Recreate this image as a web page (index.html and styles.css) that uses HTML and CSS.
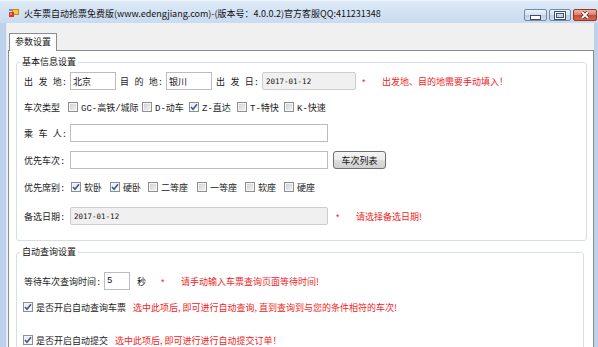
FILE: index.html
```html
<!DOCTYPE html>
<html>
  <head>
    <meta charset="utf-8">
    <title>火车票自动抢票免费版</title>
    <link rel="stylesheet" href="styles.css">
  </head>
  <body>
    <div class="window">
      <!-- 标题栏 -->
      <div class="titlebar">
        <svg class="app-icon" width="10" height="8" viewBox="0 0 10 8">
          <rect x="3.5" y="0.5" width="6" height="5" fill="#f7c844" stroke="#c98a12"/>
          <rect x="0" y="3" width="5" height="5" fill="#d9382a"/>
          <rect x="1" y="4" width="2" height="2" fill="#f08a7a"/>
          <rect x="0" y="0" width="3" height="2" fill="#6d8fc9"/>
        </svg>
        <span class="title">火车票自动抢票免费版(www.edengjiang.com)-(版本号：4.0.0.2)官方客服QQ:411231348</span>
        <div class="caption">
          <span class="cap min"></span>
          <span class="cap max"></span>
          <span class="cap close">
            <svg width="10" height="8" viewBox="0 0 10 8">
              <path d="M2 1 L8 7 M8 1 L2 7" stroke="#6b2418" stroke-width="3.4"/>
              <path d="M2 1 L8 7 M8 1 L2 7" stroke="#fff" stroke-width="1.8"/>
            </svg>
          </span>
        </div>
      </div>

      <div class="client">
        <div class="tabs">
          <div class="tab active">参数设置</div>
        </div>

        <div class="tab-page">
          <!-- 基本信息 -->
          <fieldset class="group group-basic">
            <legend>基本信息设置</legend>

            <div class="row">
              <span class="lbl">出 发 地:</span>
              <input class="input city" type="text" value="北京">
              <span class="lbl lbl-mid">目 的 地:</span>
              <input class="input city" type="text" value="银川">
              <span class="lbl lbl-mid">出 发 日:</span>
              <input class="input date date-short" type="text" value="2017-01-12" readonly>
              <span class="req">*</span>
              <span class="note">出发地、目的地需要手动填入！</span>
            </div>

            <div class="row types">
              <span class="lbl">车次类型</span>
              <label class="check"><span class="box"></span>GC-高铁/城际</label>
              <label class="check"><span class="box"></span>D-动车</label>
              <label class="check"><span class="box on"><svg width="8" height="8" viewBox="0 0 8 8"><path d="M1 4 L3 6.3 L7 1.2" fill="none" stroke="#3d5a92" stroke-width="1.6"/></svg></span>Z-直达</label>
              <label class="check"><span class="box"></span>T-特快</label>
              <label class="check"><span class="box"></span>K-快速</label>
            </div>

            <div class="row row-passenger">
              <span class="lbl">乘 车 人:</span>
              <input class="input wide" type="text">
            </div>

            <div class="row row-trains">
              <span class="lbl">优先车次:</span>
              <input class="input wide" type="text">
              <button class="btn">车次列表</button>
            </div>

            <div class="row seats">
              <span class="lbl">优先席别:</span>
              <label class="check"><span class="box on"><svg width="8" height="8" viewBox="0 0 8 8"><path d="M1 4 L3 6.3 L7 1.2" fill="none" stroke="#3d5a92" stroke-width="1.6"/></svg></span>软卧</label>
              <label class="check"><span class="box on"><svg width="8" height="8" viewBox="0 0 8 8"><path d="M1 4 L3 6.3 L7 1.2" fill="none" stroke="#3d5a92" stroke-width="1.6"/></svg></span>硬卧</label>
              <label class="check"><span class="box"></span>二等座</label>
              <label class="check"><span class="box"></span>一等座</label>
              <label class="check"><span class="box"></span>软座</label>
              <label class="check"><span class="box"></span>硬座</label>
            </div>

            <div class="row row-backup">
              <span class="lbl">备选日期:</span>
              <input class="input date wide" type="text" value="2017-01-12" readonly>
              <span class="req req-far">*</span>
              <span class="note">请选择备选日期!</span>
            </div>
          </fieldset>

          <!-- 自动查询 -->
          <fieldset class="group group-auto">
            <legend>自动查询设置</legend>

            <div class="row">
              <span class="lbl lbl-wait">等待车次查询时间:</span>
              <input class="input secs" type="text" value="5">
              <span class="unit">秒</span>
              <span class="req">*</span>
              <span class="note">请手动输入车票查询页面等待时间!</span>
            </div>

            <div class="row row-opt">
              <label class="check opt"><span class="box on"><svg width="8" height="8" viewBox="0 0 8 8"><path d="M1 4 L3 6.3 L7 1.2" fill="none" stroke="#3d5a92" stroke-width="1.6"/></svg></span>是否开启自动查询车票</label>
              <span class="note">选中此项后, 即可进行自动查询, 直到查询到与您的条件相符的车次!</span>
            </div>

            <div class="row row-submit">
              <label class="check opt"><span class="box on"><svg width="8" height="8" viewBox="0 0 8 8"><path d="M1 4 L3 6.3 L7 1.2" fill="none" stroke="#3d5a92" stroke-width="1.6"/></svg></span>是否开启自动提交</label>
              <span class="note">选中此项后, 即可进行进行自动提交订单！</span>
            </div>
          </fieldset>
        </div>
      </div>
    </div>
  </body>
</html>
```

FILE: styles.css
```css
* {
  box-sizing: border-box;
}
body {
  margin: 0;
  width: 598px;
  height: 347px;
  overflow: hidden;
  background: #bcd2ec;
  font-family: "Liberation Mono", "Noto Sans CJK SC", monospace;
  font-size: 9px;
  color: #1a1a1a;
}
.window {
  height: 347px;
  display: flex;
  flex-direction: column;
}

/* 标题栏 */
.titlebar {
  height: 23px;
  flex: none;
  display: flex;
  align-items: center;
  padding: 0 1px 0 9px;
  background: linear-gradient(#dde9f6, #c9dbf0);
  border-top: 1px solid #eef4fb;
}
.app-icon {
  flex: none;
  margin-top: 2px;
}
.title {
  margin-left: 5px;
  margin-top: 3px;
  font-family: "Noto Sans CJK SC", sans-serif;
  font-size: 9px;
  color: #111;
  white-space: nowrap;
}
.caption {
  margin-left: auto;
  align-self: flex-start;
  margin-top: 8px;
  display: flex;
  gap: 2px;
}
.cap {
  width: 23px;
  height: 12px;
  border: 1px solid #7389aa;
  border-radius: 2px;
  background: linear-gradient(#eef3fa, #d6e2f0 45%, #bccee5 50%, #d0ddee);
  display: flex;
  align-items: center;
  justify-content: center;
}
.cap.max {
  width: 22px;
}
.cap.close {
  width: 24px;
  border-color: #8e3b2c;
  background: linear-gradient(#eeb4a6, #db8471 45%, #c84a33 50%, #d9674f);
}
.cap.min::after {
  content: "";
  width: 9px;
  height: 3px;
  margin-top: 5px;
  background: #fff;
  border: 1px solid #3e4f6d;
}
.cap.max::after {
  content: "";
  width: 10px;
  height: 7px;
  border: 1px solid #3e4f6d;
  box-shadow: inset 0 0 0 1px #fff, inset 0 0 0 2px #3e4f6d;
}

/* 客户区 */
.client {
  flex: 1;
  min-height: 0;
  margin: 0 4px 0 6px;
  padding: 10px 0 0 1px;
  border-left: 1px solid #dfe8f3;
  background: #f0f0f0;
  display: flex;
  flex-direction: column;
}
.tabs {
  display: flex;
  margin-bottom: -1px;
  position: relative;
  z-index: 1;
}
.tab {
  margin-left: 1px;
  height: 18px;
  line-height: 16px;
  padding: 0 5px;
  border: 1px solid #898c95;
  border-bottom: none;
  background: #fff;
  font-family: "Noto Sans CJK SC", sans-serif;
}
.tab-page {
  flex: 1;
  border: 1px solid #898c95;
  background: #fff;
}

/* 分组框 */
.group {
  margin: 5px 6px 0 7px;
  padding: 4px 7px 15px 7px;
  border: 1px solid #d5dfe5;
  border-radius: 3px;
  min-width: 0;
}
.group legend {
  margin-left: -4px;
  padding: 0 2px;
  line-height: 12px;
  font-family: "Noto Sans CJK SC", sans-serif;
  color: #111;
}
.group-auto {
  margin: 5px 9px 0 7px;
  padding-top: 14px;
}

.row {
  display: flex;
  align-items: center;
  height: 18px;
  white-space: nowrap;
}
.row + .row {
  margin-top: 8px;
}
.row.row-trains,
.row.seats {
  margin-top: 9px;
}
.row.row-backup {
  margin-top: 11px;
}
.row.row-submit {
  margin-top: 15px;
}

.lbl {
  width: 46px;
  flex: none;
}
.lbl-mid {
  margin-left: 4px;
}
.lbl-wait {
  width: 80px;
}

.input {
  height: 18px;
  padding: 0 2px;
  border: 1px solid #b9bcc2;
  background: #fff;
  font-family: "Noto Sans CJK SC", sans-serif;
  font-size: 9px;
  color: #111;
  outline: none;
}
.input.city {
  width: 46px;
}
.input.wide {
  width: 258px;
}
.input.secs {
  width: 26px;
  font-family: "Liberation Mono", monospace;
}
.input.date {
  background: #f0f0f0;
  border-color: #cdcdcd;
  border-radius: 2px;
  padding-left: 3px;
  font-family: "DejaVu Sans Mono", monospace;
  font-size: 7.5px;
}
.input.date-short {
  width: 94px;
}

.btn {
  margin-left: 5px;
  width: 53px;
  height: 18px;
  padding: 0;
  border: 1px solid #707070;
  border-radius: 3px;
  background: linear-gradient(#f4f4f4, #ebebeb 48%, #dddddd 52%, #cfcfcf);
  font-family: "Noto Sans CJK SC", sans-serif;
  font-size: 9px;
  color: #111;
}

.req {
  width: 20px;
  margin-left: 6px;
  color: #f01c1c;
  font-family: "Liberation Sans", sans-serif;
  font-size: 9px;
  padding-top: 2px;
}
.req.req-far {
  margin-left: 8px;
}
.unit {
  width: 18px;
  margin-left: 7px;
  font-family: "Noto Sans CJK SC", sans-serif;
}
.note {
  color: #f01c1c;
  font-family: "Noto Sans CJK SC", sans-serif;
  font-size: 9px;
}

/* 复选框 */
.check {
  display: flex;
  align-items: center;
}
.box {
  width: 10px;
  height: 10px;
  flex: none;
  margin-right: 3px;
  border: 1px solid #8e8f8f;
  background: linear-gradient(135deg, #cfcfcf, #f3f3f3);
  box-shadow: inset 0 0 0 1px #f4f4f4;
  display: flex;
  align-items: center;
  justify-content: center;
}
.box.on {
  background: linear-gradient(135deg, #e4e9f0, #ffffff);
}
.row.types {
  display: grid;
  grid-template-columns: 44px 74px 47px 48px 47px auto;
}
.row.seats {
  display: grid;
  grid-template-columns: 47px 39px 38px 49px 48px 39px auto;
}
.check.opt {
  margin-left: -1px;
  margin-right: 7px;
  font-family: "Noto Sans CJK SC", sans-serif;
}
```
